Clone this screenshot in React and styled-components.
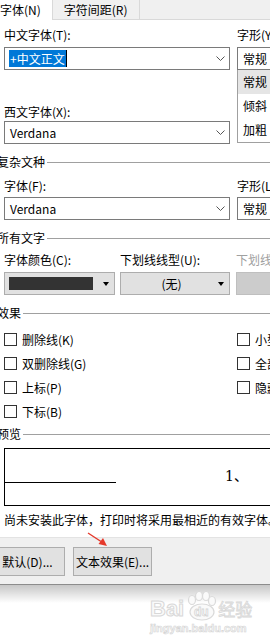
import React from 'react';
import styled, { createGlobalStyle } from 'styled-components';

const GlobalStyle = createGlobalStyle`
	html, body {
		margin: 0;
		padding: 0;
		background: #fff;
	}
	body {
		font-family: "Noto Sans CJK SC", "Noto Sans", sans-serif;
	}
`;

function Chevron() {
	return (
		<svg width="9" height="5" viewBox="0 0 9 5">
			<polyline points="0.5,0.5 4.5,4.5 8.5,0.5" fill="none" stroke="#555" strokeWidth="1" />
		</svg>
	);
}

function Paw() {
	return (
		<svg width="34" height="30" viewBox="0 0 34 30">
			<g fill="#fafafa" stroke="#dadada" strokeWidth="1.2">
				<ellipse cx="8" cy="9" rx="3.5" ry="4.5" />
				<ellipse cx="15" cy="5" rx="3.5" ry="4.5" />
				<ellipse cx="22" cy="5" rx="3.5" ry="4.5" />
				<ellipse cx="28" cy="10" rx="3.5" ry="4.5" />
				<ellipse cx="18" cy="21" rx="12" ry="8" />
			</g>
			<text x="10" y="25" fontSize="12" fontWeight="bold" fontFamily="Liberation Sans, sans-serif" fill="#fff" stroke="#d6d6d6" strokeWidth="0.8">
				du
			</text>
		</svg>
	);
}

function Arrow() {
	return (
		<ArrowSvg width="28" height="22" viewBox="0 0 28 22">
			<line x1="4" y1="4" x2="17" y2="12.5" stroke="#e5392b" strokeWidth="1.4" />
			<polygon points="23,17 14.5,15 19,9" fill="#e5392b" />
		</ArrowSvg>
	);
}

export default function App() {
	return (
		<Page>
			<GlobalStyle />
			<TabBar>
				<Tab $active $first>字体(N)</Tab>
				<Tab>字符间距(R)</Tab>
			</TabBar>

			<Body>
				<Columns>
					<div>
						<Label>中文字体(T):</Label>
						<Combo $mt={4}>
							<span>
								<Selection>+中文正文</Selection>
								<Caret />
							</span>
							<Chevron />
						</Combo>
						<Label $mt={34}>西文字体(X):</Label>
						<Combo $mt={1}>
							<ComboText>Verdana</ComboText>
							<Chevron />
						</Combo>
					</div>
					<div>
						<Label>字形(Y):</Label>
						<StyleBox $mt={4}>常规</StyleBox>
						<StyleList>
							<StyleItem $selected>常规</StyleItem>
							<StyleItem>倾斜</StyleItem>
							<StyleItem>加粗</StyleItem>
						</StyleList>
					</div>
				</Columns>

				<Section $mt={10}>复杂文种</Section>
				<Columns>
					<div>
						<Label $mt={8}>字体(F):</Label>
						<Combo $mt={3}>
							<ComboText>Verdana</ComboText>
							<Chevron />
						</Combo>
					</div>
					<div>
						<Label $mt={8}>字形(L):</Label>
						<StyleBox $mt={3}>常规</StyleBox>
					</div>
				</Columns>

				<Section $mt={10}>所有文字</Section>
				<TripleRow>
					<div>
						<Label $mt={6}>字体颜色(C):</Label>
						<DropButton $mt={4}>
							<Swatch />
							<Triangle />
						</DropButton>
					</div>
					<div>
						<Label $mt={6}>下划线线型(U):</Label>
						<DropButton $mt={4}>
							<DropText>(无)</DropText>
							<Triangle />
						</DropButton>
					</div>
					<ThirdCol>
						<Label $mt={6} $disabled>下划线颜色(I):</Label>
						<DropButton $mt={4} $disabled />
					</ThirdCol>
				</TripleRow>

				<Section $mt={10}>效果</Section>
				<Columns $mt={6}>
					<div>
						<CheckRow><CheckBox />删除线(K)</CheckRow>
						<CheckRow><CheckBox />双删除线(G)</CheckRow>
						<CheckRow><CheckBox />上标(P)</CheckRow>
						<CheckRow><CheckBox />下标(B)</CheckRow>
					</div>
					<div>
						<CheckRow><CheckBox />小型大写字母(M)</CheckRow>
						<CheckRow><CheckBox />全部大写字母(A)</CheckRow>
						<CheckRow><CheckBox />隐藏(H)</CheckRow>
					</div>
				</Columns>

				<Section $mt={3}>预览</Section>
				<Preview>
					<Baseline />
					<Sample>1、</Sample>
				</Preview>
				<Note>尚未安装此字体，打印时将采用最相近的有效字体。</Note>
			</Body>

			<Footer>
				<FooterButton $w={75} $ml={-10}>默认(D)...</FooterButton>
				<FooterButton $w={79} $ml={8}>文本效果(E)...</FooterButton>
			</Footer>
			<Shadow />

			<Watermark>
				<MarkRow>
					<MarkBig>Bai</MarkBig>
					<Paw />
					<MarkCn>经验</MarkCn>
				</MarkRow>
				<MarkUrl>jingyan.baidu.com</MarkUrl>
			</Watermark>

			<Arrow />
		</Page>
	);
}

const Page = styled.div`
	position: relative;
	width: 270px;
	height: 642px;
	overflow: hidden;
	background: #fff;
	color: #000;
	font-size: 12px;
`;

const TabBar = styled.div`
	display: flex;
	box-sizing: border-box;
	height: 20px;
	background: #f0f0f0;
	border-bottom: 1px solid #d9d9d9;
`;

const Tab = styled.div`
	height: ${(p) => (p.$active ? '20px' : '19px')};
	line-height: 19px;
	padding: 0 11px;
	margin-left: ${(p) => (p.$first ? '-11px' : '0')};
	background: ${(p) => (p.$active ? '#fff' : '#f0f0f0')};
	border-right: 1px solid #d9d9d9;
	white-space: nowrap;
	position: relative;
	z-index: 1;
`;

const Body = styled.div`
	padding: 7px 0 0 4px;
`;

const Columns = styled.div`
	display: grid;
	grid-template-columns: 226px 1fr;
	column-gap: 7px;
	align-items: start;
	margin-top: ${(p) => p.$mt || 0}px;
`;

const Label = styled.div`
	height: 16px;
	line-height: 16px;
	white-space: nowrap;
	margin-top: ${(p) => p.$mt || 0}px;
	color: ${(p) => (p.$disabled ? '#a0a0a0' : '#000')};
`;

const Combo = styled.div`
	box-sizing: border-box;
	width: 226px;
	height: 23px;
	margin-top: ${(p) => p.$mt || 0}px;
	border: 1px solid #7a7a7a;
	background: #fff;
	display: flex;
	align-items: center;
	justify-content: space-between;
	padding: 0 4px 0 5px;
`;

const ComboText = styled.span`
	line-height: 17px;
`;

const Selection = styled.span`
	display: inline-block;
	margin-left: -1px;
	padding: 0 1px;
	line-height: 17px;
	background: #0078d7;
	color: #fff;
`;

const Caret = styled.span`
	display: inline-block;
	width: 1px;
	height: 17px;
	background: #000;
	vertical-align: top;
`;

const StyleBox = styled.div`
	box-sizing: border-box;
	width: 70px;
	height: 23px;
	margin-top: ${(p) => p.$mt || 0}px;
	border: 1px solid #7a7a7a;
	padding-left: 5px;
	line-height: 21px;
`;

const StyleList = styled.div`
	width: 70px;
	box-sizing: border-box;
	border: 1px solid #a0a0a0;
	border-top: none;
`;

const StyleItem = styled.div`
	height: 24px;
	line-height: 24px;
	padding-left: 5px;
	background: ${(p) => (p.$selected ? '#e5e5e5' : '#fff')};
`;

const Section = styled.div`
	display: flex;
	align-items: center;
	gap: 2px;
	margin-left: -7px;
	margin-top: ${(p) => p.$mt || 0}px;
	line-height: 16px;
	white-space: nowrap;

	&::after {
		content: '';
		flex: 1;
		height: 1px;
		background: #a0a0a0;
	}
`;

const TripleRow = styled.div`
	display: grid;
	grid-template-columns: 111px 110px 1fr;
	column-gap: 5px;
	align-items: start;
`;

const ThirdCol = styled.div`
	margin-left: 1px;
`;

const DropButton = styled.div`
	box-sizing: border-box;
	width: ${(p) => (p.$disabled ? '70px' : '100%')};
	height: 23px;
	margin-top: ${(p) => p.$mt || 0}px;
	border: 1px solid ${(p) => (p.$disabled ? '#bfbfbf' : '#adadad')};
	background: ${(p) => (p.$disabled ? '#cccccc' : '#e1e1e1')};
	display: flex;
	align-items: center;
	justify-content: space-between;
	padding: 0 5px 0 4px;
`;

const Swatch = styled.span`
	width: 84px;
	height: 13px;
	background: #333;
`;

const DropText = styled.span`
	flex: 1;
	text-align: center;
	line-height: 17px;
`;

const Triangle = styled.span`
	width: 0;
	height: 0;
	border-left: 3px solid transparent;
	border-right: 3px solid transparent;
	border-top: 4px solid #000;
`;

const CheckRow = styled.div`
	display: flex;
	align-items: center;
	gap: 5px;
	height: 24px;
	white-space: nowrap;
`;

const CheckBox = styled.span`
	box-sizing: border-box;
	width: 13px;
	height: 13px;
	border: 1px solid #333;
	background: #fff;
	flex-shrink: 0;
`;

const Preview = styled.div`
	box-sizing: border-box;
	width: 300px;
	height: 58px;
	margin-top: 6px;
	border: 1px solid #000;
	display: flex;
	align-items: flex-start;
`;

const Baseline = styled.div`
	box-sizing: border-box;
	width: 111px;
	height: 34px;
	border-bottom: 1px solid #000;
`;

const Sample = styled.div`
	margin: 19px 0 0 109px;
	font-family: "DejaVu Serif", "Noto Sans CJK SC", serif;
	font-size: 14px;
	line-height: 16px;
`;

const Note = styled.div`
	margin-top: 6px;
	line-height: 16px;
	white-space: nowrap;
`;

const Footer = styled.div`
	display: flex;
	margin-top: 9px;
	padding: 9px 0 8px;
	background: #f0f0f0;
	border-top: 1px solid #e3e3e3;
	border-bottom: 1px solid #8c8c8c;
`;

const FooterButton = styled.div`
	box-sizing: border-box;
	flex-shrink: 0;
	width: ${(p) => p.$w}px;
	margin-left: ${(p) => p.$ml}px;
	height: 29px;
	line-height: 27px;
	text-align: center;
	white-space: nowrap;
	border: 1px solid #adadad;
	background: #e1e1e1;
`;

const Shadow = styled.div`
	height: 18px;
	background: linear-gradient(to bottom, rgba(0, 0, 0, 0.22), rgba(0, 0, 0, 0));
`;

const Watermark = styled.div`
	margin-top: -12px;
	padding-left: 150px;
`;

const MarkRow = styled.div`
	display: flex;
	align-items: flex-end;
	height: 30px;
`;

const MarkBig = styled.span`
	font-family: "Liberation Sans", sans-serif;
	font-weight: bold;
	font-size: 22px;
	line-height: 24px;
	color: #fafafa;
	-webkit-text-stroke: 1px #d8d8d8;
`;

const MarkCn = styled.span`
	font-size: 17px;
	line-height: 24px;
	color: #fafafa;
	-webkit-text-stroke: 0.8px #d8d8d8;
`;

const MarkUrl = styled.div`
	margin-top: 1px;
	font-family: "Liberation Sans", sans-serif;
	font-weight: bold;
	font-size: 11px;
	line-height: 12px;
	color: #fafafa;
	-webkit-text-stroke: 0.6px #d4d4d4;
`;

const ArrowSvg = styled.svg`
	position: absolute;
	left: 84px;
	top: 529px;
`;
